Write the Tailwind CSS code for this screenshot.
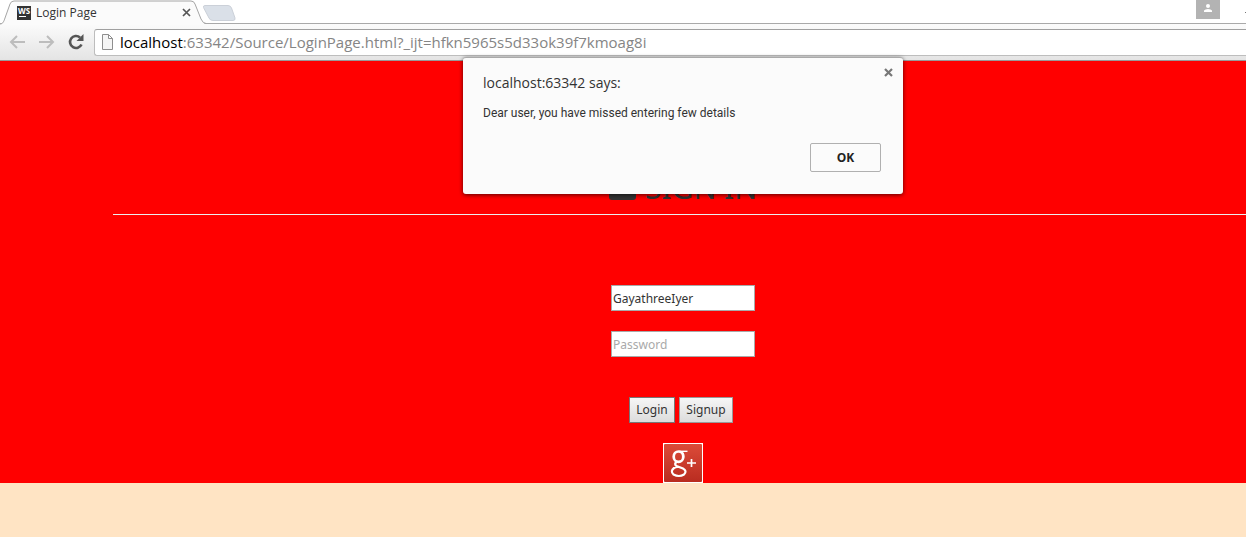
<!DOCTYPE html>
<html lang="en">
<head>
<meta charset="utf-8">
<meta name="viewport" content="width=device-width, initial-scale=1">
<title>Login Page</title>
<script src="https://cdn.jsdelivr.net/npm/@tailwindcss/browser@4"></script>
</head>
<body class="relative flex min-h-screen flex-col overflow-x-hidden bg-[#ffe4c4] font-['Open_Sans',sans-serif] text-[#333]">
  <header>
    <!-- Tab strip -->
    <div class="relative flex h-6 bg-white">
      <div class="absolute inset-x-0 bottom-0 h-px bg-[#a9a9a9]"></div>
      <div class="relative flex h-[25px] w-[206px] items-center pr-[15px] pl-[17px]">
        <svg class="absolute inset-0 h-[25px] w-[206px]" viewBox="0 0 206 25" fill="none" aria-hidden="true">
          <path d="M0 24C3 24 4 21 5 18L10 4Q11 1 14 1H191Q194 1 195 4L201 19Q203 24 206 24V25H0Z" fill="#fbfbfb"/>
          <path d="M0 24C3 24 4 21 5 18L10 4Q11 1 14 1H191Q194 1 195 4L201 19Q203 23.5 206 23.5" stroke="#a5a5a5"/>
        </svg>
        <div class="relative flex h-[14px] w-[14px] flex-col bg-[#333] pl-px text-white">
          <span class="text-[8px] leading-[10px] font-bold">WS</span>
          <span class="ml-px h-px w-[7px] bg-white"></span>
        </div>
        <span class="relative ml-[5px] flex-1 text-xs">Login Page</span>
        <button type="button" aria-label="Close tab" class="relative">
          <svg class="h-[9px] w-[9px]" viewBox="0 0 9 9" stroke="#555" stroke-width="1.7"><path d="M1 1l7 7M8 1L1 8"/></svg>
        </button>
      </div>
      <button type="button" aria-label="New tab" class="relative -ml-[4px] flex pt-[5px]">
        <svg class="h-4 w-[34px]" viewBox="0 0 34 16"><path d="M3 .5H26Q28.500 .5 29.500 3L33 13Q33.500 15.500 31 15.500H11Q8 15.500 7 13L1.500 2.500Q1 .5 3 .5Z" fill="#dae0e8" stroke="#cbd0d8"/></svg>
      </button>
      <button type="button" aria-label="Profile" class="mr-[26px] ml-auto flex h-[19px] w-6 justify-center bg-[#b3b3b3] pt-1">
        <svg class="h-2 w-2" viewBox="0 0 8 8" fill="#fff"><circle cx="4" cy="2" r="2"/><path d="M0 8V6.500Q1 5 4 5T8 6.500V8Z"/></svg>
      </button>
      <span class="absolute top-3 right-0 h-px w-px bg-[#777]"></span>
    </div>
    <!-- Toolbar -->
    <div class="flex h-[37px] items-center border-b border-[#999] bg-linear-to-b from-[#fbfbfb] to-[#e4e4e4] pl-[9px]">
      <button type="button" aria-label="Back">
        <svg class="h-4 w-4" viewBox="0 0 16 16" fill="none" stroke="#bdbdbd" stroke-width="2"><path d="M16 8H2.500M8 2L2 8l6 6"/></svg>
      </button>
      <button type="button" aria-label="Forward" class="ml-[14px]">
        <svg class="h-4 w-4" viewBox="0 0 16 16" fill="none" stroke="#bdbdbd" stroke-width="2"><path d="M0 8h13.500M8 2l6 6-6 6"/></svg>
      </button>
      <button type="button" aria-label="Reload" class="ml-3">
        <svg class="h-[18px] w-[18px]" viewBox="0 0 18 18"><path d="M14.500 11.500A6 6 0 1 1 13 4.500" fill="none" stroke="#555" stroke-width="2.600"/><path d="M16.500 1v7h-7Z" fill="#555"/></svg>
      </button>
      <div class="ml-[9px] flex h-[27px] flex-1 items-center rounded-l-[3px] border border-r-0 border-[#bdbdbd] border-t-[#a0a0a0] bg-white pl-[7px]">
        <svg class="h-4 w-[11px]" viewBox="0 0 11 16" fill="#f5f5f5" stroke="#8e8e8e"><path d="M.5 .5H6.500L10.500 4.500V15.500H.5ZM6.500 .5V4.500H10.500"/></svg>
        <div class="ml-[7px] text-[15px] leading-6 whitespace-nowrap text-[#858585]"><span class="text-black">localhost</span>:63342/Source/LoginPage.html?_ijt=hfkn5965s5d33ok39f7kmoag8i</div>
      </div>
    </div>
  </header>

  <main class="overflow-hidden bg-[#f00] font-['Noto_Sans',sans-serif]">
    <div class="-mr-[7px] ml-[113px] flex flex-col items-center">
      <h1 class="mt-[105px] flex h-[49px] w-full items-center justify-center gap-2 border-b border-[#eee] pb-1 text-[30px] leading-9 text-[#333]">
        <svg class="mb-1 h-7 w-7" viewBox="0 0 28 28" aria-hidden="true"><path d="M0 3Q0 0 3 0H24Q27 0 27 3V25Q27 28 24 28H3Q0 28 0 25Z" fill="#333"/></svg>
        <span>SIGN IN</span>
      </h1>
      <form class="mt-[70px] flex flex-col items-center text-xs">
        <input type="text" aria-label="Username" value="GayathreeIyer" class="h-[26px] w-36 border border-[#a9a9a9] bg-white px-px text-[#333]">
        <input type="password" aria-label="Password" placeholder="Password" class="mt-5 h-[26px] w-36 border border-[#a9a9a9] bg-white px-px placeholder:text-[#a9a9a9]">
        <div class="mt-10 mr-1 flex gap-1">
          <button type="button" class="h-[26px] w-[46px] border border-[#777] bg-linear-to-b from-[#f6f6f6] to-[#dcdcdc]">Login</button>
          <button type="button" class="h-[26px] w-[54px] border border-[#999] bg-linear-to-b from-[#f6f6f6] to-[#dcdcdc]">Signup</button>
        </div>
      </form>
      <a href="#" aria-label="Google Plus" class="mt-5">
        <svg class="h-10 w-10" viewBox="0 0 40 40">
          <defs><linearGradient id="g" x2="0" y2="1"><stop stop-color="#dc4b39"/><stop offset="1" stop-color="#b92c20"/></linearGradient></defs>
          <path fill="#fff" d="M0 0h40v40H0z"/><rect x="1" y="1" width="38" height="38" rx="1" fill="url(#g)"/>
          <g fill="none" stroke="#fff">
            <ellipse cx="15.500" cy="13.700" rx="4.800" ry="5.200" stroke-width="2.700"/>
            <path d="M16 8.300H24.500" stroke-width="1.400"/><path d="M19 9Q22 12 19.500 17" stroke-width="1.500"/>
            <path d="M14 18.500Q10.500 21 13.500 23L20 25.500Q24.500 28 21 31.500Q16 34.500 10.500 31.500Q7 28 11 25Q13 23.500 16 24" stroke-width="2.200"/>
            <path d="M28.500 16v8M24 20h9" stroke-width="1.700"/>
          </g>
        </svg>
      </a>
    </div>
  </main>

  <!-- Alert over the toolbar and page -->
  <div class="pointer-events-none absolute top-[57px] right-0 left-[120px] flex justify-center">
    <section role="alertdialog" aria-labelledby="alert-title" aria-describedby="alert-text" class="pointer-events-auto relative flex w-[440px] flex-col rounded-[3px] border-t border-[#aaa] bg-[#fbfbfb] px-5 pt-[13px] pb-[22px] shadow-[0_1px_4px_rgba(0,0,0,0.65)]">
      <button type="button" aria-label="Close" class="absolute top-[10px] right-[10px]">
        <svg class="h-[9px] w-[9px]" viewBox="0 0 9 9" stroke="#777" stroke-width="2.200"><path d="M1 1l7 7M8 1L1 8"/></svg>
      </button>
      <h2 id="alert-title" class="text-sm leading-6">localhost:63342 says:</h2>
      <p id="alert-text" class="mt-2 font-[Roboto,sans-serif] text-xs leading-5">Dear user, you have missed entering few details</p>
      <button type="button" class="mt-5 mr-[2px] h-[29px] w-[71px] self-end rounded-[2px] border border-[#b0b0b0] text-xs font-bold text-[#222]">OK</button>
    </section>
  </div>
</body>
</html>
